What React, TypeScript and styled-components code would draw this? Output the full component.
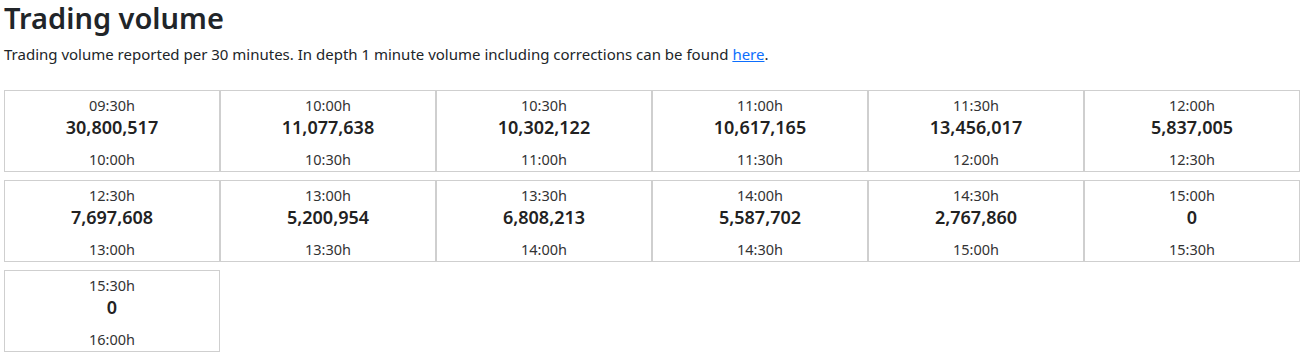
import styled, { createGlobalStyle } from "styled-components";

const slots = [
  { from: "09:30h", to: "10:00h", volume: 30800517 },
  { from: "10:00h", to: "10:30h", volume: 11077638 },
  { from: "10:30h", to: "11:00h", volume: 10302122 },
  { from: "11:00h", to: "11:30h", volume: 10617165 },
  { from: "11:30h", to: "12:00h", volume: 13456017 },
  { from: "12:00h", to: "12:30h", volume: 5837005 },
  { from: "12:30h", to: "13:00h", volume: 7697608 },
  { from: "13:00h", to: "13:30h", volume: 5200954 },
  { from: "13:30h", to: "14:00h", volume: 6808213 },
  { from: "14:00h", to: "14:30h", volume: 5587702 },
  { from: "14:30h", to: "15:00h", volume: 2767860 },
  { from: "15:00h", to: "15:30h", volume: 0 },
  { from: "15:30h", to: "16:00h", volume: 0 },
];

function App() {
  return (
    <>
      <GlobalStyle />
      <Page>
        <Title>Trading volume</Title>
        <Intro>
          Trading volume reported per 30 minutes. In depth 1 minute volume
          including corrections can be found <Link href="#">here</Link>.
        </Intro>
        <Grid>
          {slots.map((s) => (
            <Slot key={s.from}>
              <Time>{s.from}</Time>
              <Volume>{s.volume.toLocaleString("en-US")}</Volume>
              <Time>{s.to}</Time>
            </Slot>
          ))}
        </Grid>
      </Page>
    </>
  );
}

const GlobalStyle = createGlobalStyle`
  body {
    margin: 0;
    background: #fff;
    color: #212529;
    font-family: "Noto Sans", "Open Sans", sans-serif;
  }
`;

const Page = styled.div`
  padding: 1px 7px 0 4px;
`;

const Title = styled.h2`
  margin: 0;
  font-size: 29px;
  font-weight: 600;
  line-height: 34px;
`;

const Intro = styled.p`
  margin: 9px 0 25px;
  font-size: 15px;
  line-height: 21px;
`;

const Link = styled.a`
  color: #0d6efd;
`;

const Grid = styled.div`
  display: grid;
  grid-template-columns: repeat(6, 216px);
  row-gap: 8px;
`;

const Slot = styled.div`
  height: 82px;
  box-sizing: border-box;
  border: 1px solid #cfcfcf;
  display: flex;
  flex-direction: column;
  align-items: center;
  padding-top: 4px;
`;

const Time = styled.div`
  font-size: 14.5px;
  line-height: 20px;
  color: #333;
`;

const Volume = styled.div`
  font-size: 18px;
  font-weight: 600;
  line-height: 26px;
  margin-bottom: 9px;
  margin-top: -1px;
  color: #222;
`;

export default App;
